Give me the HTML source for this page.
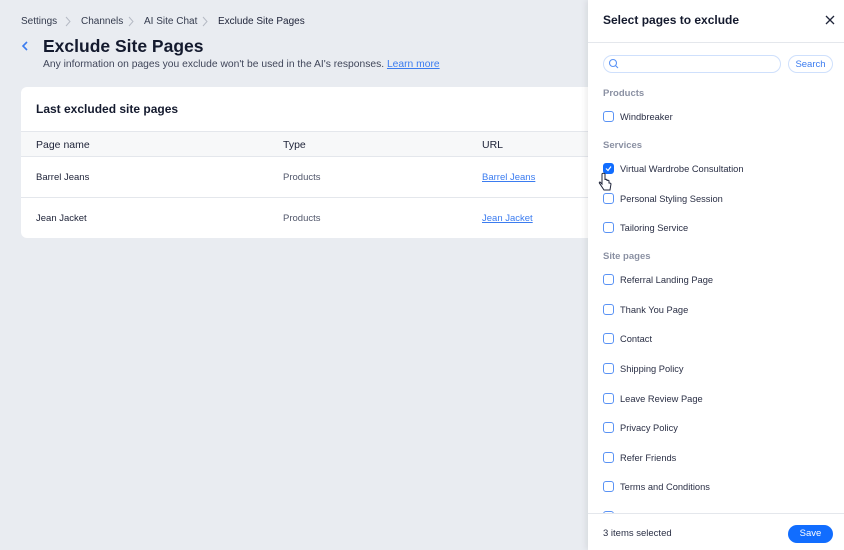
<!DOCTYPE html>
<html><head><style>
*{box-sizing:border-box;margin:0;padding:0}
body{width:844px;height:550px;overflow:hidden;background:#e9ecf1;font-family:"Liberation Sans",sans-serif;color:#20253a;position:relative}
.abs{position:absolute;white-space:nowrap}
.bc{top:16px;font-size:10px;color:#333a4d}
.card{position:absolute;left:21px;top:87px;width:580px;height:151px;background:#fff;border-radius:6px;overflow:hidden}
.panel{position:absolute;left:588px;top:0;width:256px;height:550px;background:#fff;box-shadow:-2px 0 6px rgba(0,0,0,.08)}
.cb{position:absolute;left:15px;width:11px;height:11px;border:1.5px solid #5a93f5;border-radius:3px;background:#fff}
.it{position:absolute;left:32px;font-size:9.3px;color:#2a2f45;margin-top:1px}
.sec{position:absolute;left:15px;font-size:9.5px;color:#8b91a3;font-weight:bold;margin-top:1px}
</style></head><body>
<div class="abs bc" style="left:21px">Settings</div>
<svg class="abs" style="left:65px;top:16px" width="6" height="11"><path d="M1 1L5 5.5L1 10" stroke="#b5bac4" fill="none"/></svg>
<div class="abs bc" style="left:81px">Channels</div>
<svg class="abs" style="left:128px;top:16px" width="6" height="11"><path d="M1 1L5 5.5L1 10" stroke="#b5bac4" fill="none"/></svg>
<div class="abs bc" style="left:144px">AI Site Chat</div>
<svg class="abs" style="left:202px;top:16px" width="6" height="11"><path d="M1 1L5 5.5L1 10" stroke="#b5bac4" fill="none"/></svg>
<div class="abs bc" style="left:218px;color:#20253a">Exclude Site Pages</div>
<svg class="abs" style="left:20px;top:40px" width="10" height="12"><path d="M7 2 L3 6 L7 10" stroke="#3b7cf0" stroke-width="1.6" fill="none"/></svg>
<div class="abs" style="left:43px;top:36px;font-size:17.5px;font-weight:bold;color:#141a2e">Exclude Site Pages</div>
<div class="abs" style="left:43px;top:59px;font-size:10.3px;color:#40465a">Any information on pages you exclude won't be used in the AI's responses. <span style="color:#3b7cf0;text-decoration:underline">Learn more</span></div>
<div class="card">
<div class="abs" style="left:15px;top:15px;font-size:12px;font-weight:bold;color:#141a2e">Last excluded site pages</div>
<div style="position:absolute;left:0;top:44px;width:100%;height:26px;background:#f7f8f9;border-top:1px solid #e4e7ec;border-bottom:1px solid #e4e7ec"></div>
<div class="abs" style="left:15px;top:52px;font-size:10.5px">Page name</div>
<div class="abs" style="left:262px;top:52px;font-size:10.5px">Type</div>
<div class="abs" style="left:461px;top:52px;font-size:10.5px">URL</div>
<div class="abs" style="left:15px;top:85px;font-size:9.5px">Barrel Jeans</div>
<div class="abs" style="left:262px;top:85px;font-size:9.5px;color:#50566a">Products</div>
<div class="abs" style="left:461px;top:85px;font-size:9.5px;color:#3b7cf0;text-decoration:underline">Barrel Jeans</div>
<div style="position:absolute;left:0;top:110px;width:100%;border-top:1px solid #e4e7ec"></div>
<div class="abs" style="left:15px;top:126px;font-size:9.5px">Jean Jacket</div>
<div class="abs" style="left:262px;top:126px;font-size:9.5px;color:#50566a">Products</div>
<div class="abs" style="left:461px;top:126px;font-size:9.5px;color:#3b7cf0;text-decoration:underline">Jean Jacket</div>
</div>
<div class="panel">
<div class="abs" style="left:15px;top:13px;font-size:12px;font-weight:bold;color:#141a2e">Select pages to exclude</div>
<svg class="abs" style="left:237px;top:15px" width="10" height="10"><path d="M1 1L9 9M9 1L1 9" stroke="#20253a" stroke-width="1.3"/></svg>
<div style="position:absolute;left:0;top:42px;width:100%;border-top:1px solid #e4e7ec"></div>
<div style="position:absolute;left:15px;top:55px;width:178px;height:18px;border:1px solid #cfe0fc;border-radius:9px"></div>
<svg class="abs" style="left:20px;top:58px" width="11" height="11"><circle cx="5" cy="5" r="3.5" stroke="#5a93f5" fill="none" stroke-width="1.1"/><path d="M7.5 7.5L10 10" stroke="#5a93f5" stroke-width="1.1"/></svg>
<div style="position:absolute;left:200px;top:55px;width:45px;height:18px;border:1px solid #cfe0fc;border-radius:9px;font-size:9.5px;color:#3b7cf0;text-align:center;line-height:17px">Search</div>
<div class="sec" style="top:87px">Products</div>
<div class="cb" style="top:111px"></div><div class="it" style="top:111px">Windbreaker</div>
<div class="sec" style="top:139px">Services</div>
<div class="cb" style="top:163px;background:#116dff;border-color:#116dff"><svg style="position:absolute;left:1px;top:1px" width="7" height="7"><path d="M1 3.5L3 5.5L6 1.5" stroke="#fff" stroke-width="1.2" fill="none"/></svg></div><div class="it" style="top:163px">Virtual Wardrobe Consultation</div>
<svg class="abs" style="left:10px;top:172px" width="14" height="20"><path d="M4 2v10l-2-2c-1 0-1 1 0 2l4 6h6l1-6c0-1-1-1-2-1V9c0-1-2-1-2 0V8c0-1-2-1-2 0V2c0-1-3-1-3 0z" fill="#fff" stroke="#20253a" stroke-width="1"/></svg>
<div class="cb" style="top:193px"></div><div class="it" style="top:193px">Personal Styling Session</div>
<div class="cb" style="top:222px"></div><div class="it" style="top:222px">Tailoring Service</div>
<div class="sec" style="top:250px">Site pages</div>
<div class="cb" style="top:274px"></div><div class="it" style="top:274px">Referral Landing Page</div>
<div class="cb" style="top:304px"></div><div class="it" style="top:304px">Thank You Page</div>
<div class="cb" style="top:333px"></div><div class="it" style="top:333px">Contact</div>
<div class="cb" style="top:363px"></div><div class="it" style="top:363px">Shipping Policy</div>
<div class="cb" style="top:393px"></div><div class="it" style="top:393px">Leave Review Page</div>
<div class="cb" style="top:422px"></div><div class="it" style="top:422px">Privacy Policy</div>
<div class="cb" style="top:452px"></div><div class="it" style="top:452px">Refer Friends</div>
<div class="cb" style="top:481px"></div><div class="it" style="top:481px">Terms and Conditions</div>
<div class="cb" style="top:511px"></div>
<div style="position:absolute;left:0;top:513px;width:100%;height:37px;background:#fff;border-top:1px solid #e4e7ec"></div>
<div class="abs" style="left:15px;top:528px;font-size:9.5px;color:#2a2f45">3 items selected</div>
<div style="position:absolute;left:200px;top:525px;width:45px;height:18px;border-radius:9px;background:#116dff;color:#fff;font-size:9.5px;text-align:center;line-height:18px">Save</div>
</div>
</body></html>
